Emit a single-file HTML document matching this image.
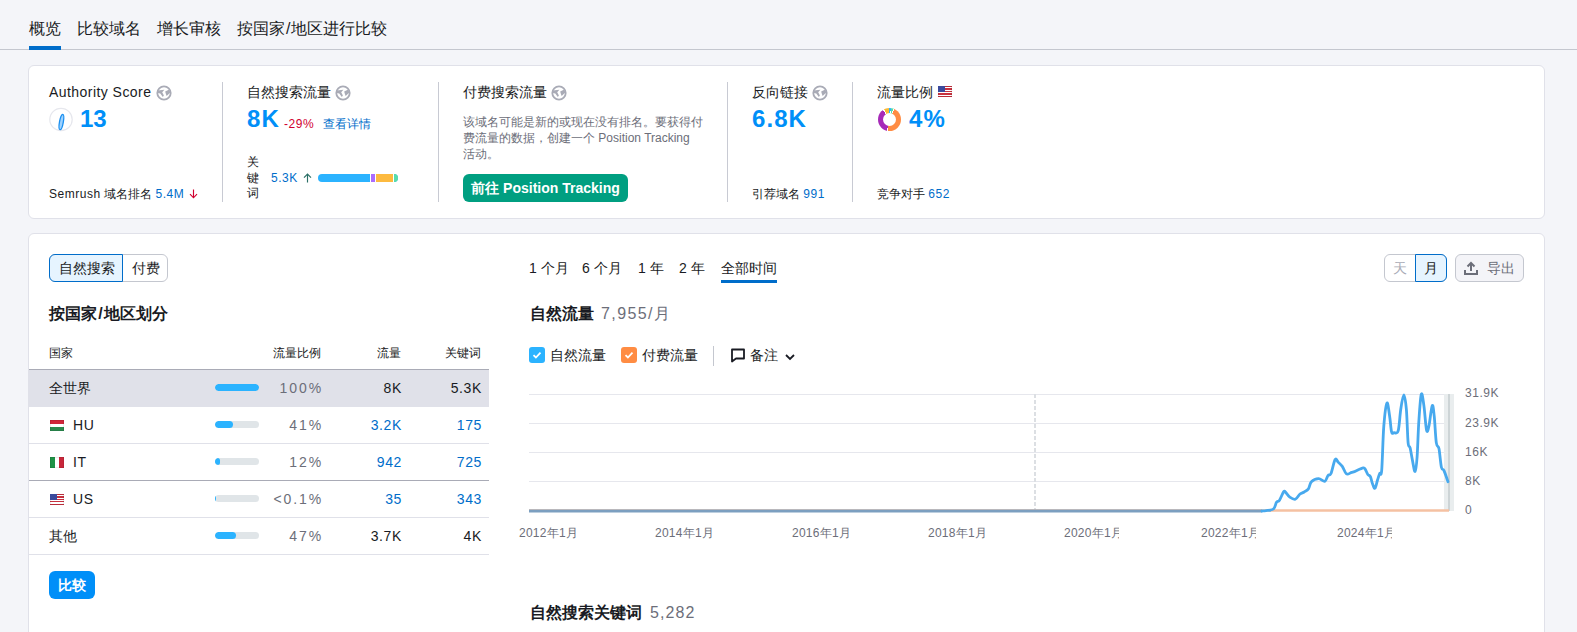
<!DOCTYPE html>
<html><head><meta charset="utf-8">
<style>
*{margin:0;padding:0;box-sizing:border-box}
html,body{width:1577px;height:632px;overflow:hidden}
body{background:#f4f5f9;font-family:"Liberation Sans",sans-serif;color:#191b23;position:relative}
.a{position:absolute;white-space:nowrap}
.tab{font-size:16px;top:19px;line-height:20px}
.card{position:absolute;background:#fff;border:1px solid #e0e1e9;border-radius:6px}
.t14{font-size:14px;line-height:16px}
.t12{font-size:12px;line-height:14px}
.big{font-size:24px;font-weight:bold;color:#008ff8;line-height:28px}
.vd{position:absolute;width:1px;background:#c8cad3;top:82px;height:120px}
.blue{color:#006dca}
.globe{position:absolute;width:16px;height:16px}

.row{position:absolute;left:0;width:490px;height:37px}
.bar{position:absolute;left:215px;top:15px;width:44px;height:7px;border-radius:4px;background:#e0e5e8;overflow:hidden}
.bar i{position:absolute;left:0;top:0;height:7px;background:#2bb3ff;border-radius:4px}
.pct{left:243px;top:11px;width:80px;text-align:right;color:#6c6e79}
.pct .l{letter-spacing:1.9px}
.c1{left:322px;top:11px;width:80px;text-align:right}
.c2{left:402px;top:11px;width:80px;text-align:right}
.flag{position:absolute;width:14px;height:11px;box-shadow:inset 0 0 0 0.5px rgba(0,0,0,.15)}
.hu{background:linear-gradient(#d0263a 0 33%,#fff 33% 66%,#2a8a4e 66%)}
.it{background:linear-gradient(90deg,#1f9146 0 33%,#fff 33% 66%,#c8263a 66%)}
.us{background:repeating-linear-gradient(#c8313f 0 0.85px,#fff 0.85px 1.7px)}
.us:before{content:"";position:absolute;left:0;top:0;width:7px;height:6px;background:#3b4a9c}
.ylab{left:1465px;font-size:12px;line-height:14px;color:#6c6e79}
.xlab{top:526px;font-size:12px;line-height:14px;color:#6c6e79;letter-spacing:0.25px}
.l{letter-spacing:0.045em}
</style></head>
<body>
<!-- top tabs -->
<div class="a tab" style="left:29px">概览</div>
<div class="a tab" style="left:77px">比较域名</div>
<div class="a tab" style="left:157px">增长审核</div>
<div class="a tab" style="left:237px">按国家<span style="padding:0 1px">/</span>地区进行比较</div>
<div class="a" style="left:0;top:49px;width:1577px;height:1px;background:#c4c7cf"></div>
<div class="a" style="left:29px;top:46px;width:32px;height:4px;background:#006dca"></div>

<!-- card 1 -->
<div class="card" style="left:28px;top:65px;width:1517px;height:154px"></div>
<div class="vd" style="left:222px"></div>
<div class="vd" style="left:438px"></div>
<div class="vd" style="left:727px"></div>
<div class="vd" style="left:852px"></div>

<div class="a t14" style="left:49px;top:84px"><span style="letter-spacing:0.032em">Authority Score</span></div>
<div class="globe" style="left:156px;top:85px"><svg width="16" height="16" viewBox="0 0 16 16"><circle cx="8" cy="8" r="6.7" fill="none" stroke="#a9abb6" stroke-width="1.8"/><path d="M1.5 5.6 L8.4 4.8 L6.2 7.3 L7.9 10.6 L6.8 12.1 L4.3 8.4 L1.7 8 Z" fill="#a9abb6"/><path d="M9.2 6.6 L13.3 4.4 L14.4 7.6 L10.6 11 L9.8 8.8 Z" fill="#a9abb6"/></svg></div>
<svg class="a" style="left:49px;top:107px" width="25" height="25" viewBox="0 0 25 25"><circle cx="12" cy="12.5" r="11.2" fill="none" stroke="#e6e7ed" stroke-width="1.2"/><ellipse cx="12.4" cy="15" rx="1.9" ry="7.8" transform="rotate(10 12.4 15)" fill="#9fd3ff" stroke="#1a8ff0" stroke-width="1.3"/></svg>
<div class="a big" style="left:80px;top:105px">13</div>
<div class="a t12" style="left:49px;top:187px"><span class="l">Semrush</span> 域名排名 <span class="blue"><span class="l">5.4M</span></span> <svg style="vertical-align:-1px;margin-left:1px" width="9" height="10" viewBox="0 0 9 10"><path d="M4.5 0.5v8.5M1 5.2l3.5 3.6 3.5-3.6" fill="none" stroke="#d1002f" stroke-width="1.15"/></svg></div>

<div class="a t14" style="left:247px;top:84px">自然搜索流量</div>
<div class="globe" style="left:335px;top:85px"><svg width="16" height="16" viewBox="0 0 16 16"><circle cx="8" cy="8" r="6.7" fill="none" stroke="#a9abb6" stroke-width="1.8"/><path d="M1.5 5.6 L8.4 4.8 L6.2 7.3 L7.9 10.6 L6.8 12.1 L4.3 8.4 L1.7 8 Z" fill="#a9abb6"/><path d="M9.2 6.6 L13.3 4.4 L14.4 7.6 L10.6 11 L9.8 8.8 Z" fill="#a9abb6"/></svg></div>
<div class="a big" style="left:247px;top:105px"><span class="l">8K</span></div>
<div class="a t12" style="left:284px;top:117px;color:#d1002f"><span class="l">-29%</span></div>
<div class="a t12 blue" style="left:323px;top:117px">查看详情</div>
<div class="a t12" style="left:247px;top:155px;line-height:15.5px;white-space:normal;width:14px">关<br>键<br>词</div>
<div class="a t12 blue" style="left:271px;top:171px"><span class="l">5.3K</span> <svg style="vertical-align:-1px;margin-left:2px" width="9" height="10" viewBox="0 0 9 10"><path d="M4.5 9.5V1M1 4.6l3.5-3.6 3.5 3.6" fill="none" stroke="#2a6f66" stroke-width="1.15"/></svg></div>
<div class="a" style="left:318px;top:174px;width:80px;height:8px;border-radius:4px;overflow:hidden;background:#2bb3ff">
  <div class="a" style="left:52px;top:0;width:1px;height:8px;background:#fff"></div>
  <div class="a" style="left:53px;top:0;width:4px;height:8px;background:#ab6cfe"></div>
  <div class="a" style="left:57px;top:0;width:1px;height:8px;background:#fff"></div>
  <div class="a" style="left:58px;top:0;width:17px;height:8px;background:#fdba3f"></div>
  <div class="a" style="left:75px;top:0;width:1px;height:8px;background:#fff"></div>
  <div class="a" style="left:76px;top:0;width:4px;height:8px;background:#59ddaa"></div>
</div>

<div class="a t14" style="left:463px;top:84px">付费搜索流量</div>
<div class="globe" style="left:551px;top:85px"><svg width="16" height="16" viewBox="0 0 16 16"><circle cx="8" cy="8" r="6.7" fill="none" stroke="#a9abb6" stroke-width="1.8"/><path d="M1.5 5.6 L8.4 4.8 L6.2 7.3 L7.9 10.6 L6.8 12.1 L4.3 8.4 L1.7 8 Z" fill="#a9abb6"/><path d="M9.2 6.6 L13.3 4.4 L14.4 7.6 L10.6 11 L9.8 8.8 Z" fill="#a9abb6"/></svg></div>
<div class="a t12" style="left:463px;top:114px;line-height:16px;color:#6c6e79;white-space:normal;width:250px">该域名可能是新的或现在没有排名。要获得付<br>费流量的数据，创建一个 Position Tracking<br>活动。</div>
<div class="a" style="left:463px;top:174px;width:165px;height:28px;background:#009f81;border-radius:6px;color:#fff;font-size:14px;font-weight:bold;line-height:28px;text-align:center">前往 Position Tracking</div>

<div class="a t14" style="left:752px;top:84px">反向链接</div>
<div class="globe" style="left:812px;top:85px"><svg width="16" height="16" viewBox="0 0 16 16"><circle cx="8" cy="8" r="6.7" fill="none" stroke="#a9abb6" stroke-width="1.8"/><path d="M1.5 5.6 L8.4 4.8 L6.2 7.3 L7.9 10.6 L6.8 12.1 L4.3 8.4 L1.7 8 Z" fill="#a9abb6"/><path d="M9.2 6.6 L13.3 4.4 L14.4 7.6 L10.6 11 L9.8 8.8 Z" fill="#a9abb6"/></svg></div>
<div class="a big" style="left:752px;top:105px"><span class="l">6.8K</span></div>
<div class="a t12" style="left:752px;top:187px">引荐域名 <span class="blue"><span class="l">991</span></span></div>

<div class="a t14" style="left:877px;top:84px">流量比例</div>
<div class="flag us" style="left:938px;top:86px;width:14px;height:11px"></div>
<div class="a" style="left:877.6px;top:107.7px;width:23px;height:23px;border-radius:50%;background:conic-gradient(#2bb3ff 0 7deg,#fff 7deg 9deg,#59ddaa 9deg 20deg,#fff 20deg 24deg,#ff8c43 24deg 190deg,#fff 190deg 194deg,#a62ab8 194deg 326deg,#fff 326deg 331deg,#f9b935 331deg 356deg,#fff 356deg 360deg)"></div>
<div class="a" style="left:882.6px;top:112.7px;width:13px;height:13px;border-radius:50%;background:#fff"></div>
<div class="a big" style="left:909px;top:105px"><span class="l">4%</span></div>
<div class="a t12" style="left:877px;top:187px">竞争对手 <span class="blue"><span class="l">652</span></span></div>

<!-- card 2 -->
<div class="card" style="left:28px;top:233px;width:1517px;height:420px"></div>


<!-- segmented -->
<div class="a" style="left:49px;top:254px;width:119px;height:28px;border:1px solid #c4c7cf;border-radius:6px"></div>
<div class="a" style="left:49px;top:254px;width:74px;height:28px;border:1px solid #006dca;border-radius:6px 0 0 6px;background:#e6f4ff"></div>
<div class="a t14" style="left:59px;top:260px;color:#191b23">自然搜索</div>
<div class="a t14" style="left:132px;top:260px">付费</div>

<div class="a" style="left:49px;top:305px;font-size:16px;font-weight:bold;line-height:18px">按国家<span style="padding:0 1.2px">/</span>地区划分</div>

<div class="a t12" style="left:49px;top:346px">国家</div>
<div class="a t12" style="left:241px;top:346px;width:80px;text-align:right">流量比例</div>
<div class="a t12" style="left:341px;top:346px;width:60px;text-align:right">流量</div>
<div class="a t12" style="left:421px;top:346px;width:60px;text-align:right">关键词</div>

<div class="a" style="left:29px;top:369px;width:460px;height:37px;background:#e0e1e9"></div>
<div class="a" style="left:29px;top:369px;width:460px;height:1px;background:#a9abb6"></div>
<div class="a" style="left:29px;top:406px;width:460px;height:1px;background:#e0e1e9"></div>
<div class="a" style="left:29px;top:443px;width:460px;height:1px;background:#e0e1e9"></div>
<div class="a" style="left:29px;top:480px;width:460px;height:1px;background:#a9abb6"></div>
<div class="a" style="left:29px;top:517px;width:460px;height:1px;background:#e0e1e9"></div>
<div class="a" style="left:29px;top:554px;width:460px;height:1px;background:#e0e1e9"></div>

<div class="row" style="top:369px">
  <div class="a t14" style="left:49px;top:11px">全世界</div>
  <div class="bar"><i style="width:44px"></i></div>
  <div class="a t14 pct"><span class="l">100%</span></div>
  <div class="a t14 c1"><span class="l">8K</span></div>
  <div class="a t14 c2"><span class="l">5.3K</span></div>
</div>
<div class="row" style="top:406px">
  <div class="flag hu" style="left:50px;top:14px"></div>
  <div class="a t14" style="left:73px;top:11px"><span class="l">HU</span></div>
  <div class="bar"><i style="width:18px"></i></div>
  <div class="a t14 pct"><span class="l">41%</span></div>
  <div class="a t14 c1 blue"><span class="l">3.2K</span></div>
  <div class="a t14 c2 blue"><span class="l">175</span></div>
</div>
<div class="row" style="top:443px">
  <div class="flag it" style="left:50px;top:14px"></div>
  <div class="a t14" style="left:73px;top:11px"><span class="l">IT</span></div>
  <div class="bar"><i style="width:5px"></i></div>
  <div class="a t14 pct"><span class="l">12%</span></div>
  <div class="a t14 c1 blue"><span class="l">942</span></div>
  <div class="a t14 c2 blue"><span class="l">725</span></div>
</div>
<div class="row" style="top:480px">
  <div class="flag us" style="left:50px;top:14px"></div>
  <div class="a t14" style="left:73px;top:11px"><span class="l">US</span></div>
  <div class="bar"><i style="width:1px"></i></div>
  <div class="a t14 pct"><span class="l">&lt;0.1%</span></div>
  <div class="a t14 c1 blue"><span class="l">35</span></div>
  <div class="a t14 c2 blue"><span class="l">343</span></div>
</div>
<div class="row" style="top:517px">
  <div class="a t14" style="left:49px;top:11px">其他</div>
  <div class="bar"><i style="width:21px"></i></div>
  <div class="a t14 pct"><span class="l">47%</span></div>
  <div class="a t14 c1"><span class="l">3.7K</span></div>
  <div class="a t14 c2"><span class="l">4K</span></div>
</div>

<div class="a" style="left:49px;top:571px;width:46px;height:28px;background:#008ff8;border-radius:6px;color:#fff;font-size:14px;font-weight:bold;line-height:28px;text-align:center">比较</div>

<!-- right: time tabs -->
<div class="a t14" style="left:529px;top:260px"><span class="l">1</span> 个月</div>
<div class="a t14" style="left:582px;top:260px"><span class="l">6</span> 个月</div>
<div class="a t14" style="left:638px;top:260px"><span class="l">1</span> 年</div>
<div class="a t14" style="left:679px;top:260px"><span class="l">2</span> 年</div>
<div class="a t14" style="left:721px;top:260px">全部时间</div>
<div class="a" style="left:721px;top:280px;width:56px;height:3px;background:#006dca"></div>

<div class="a" style="left:1384px;top:254px;width:63px;height:28px;border:1px solid #c4c7cf;border-radius:6px"></div>
<div class="a" style="left:1415px;top:254px;width:32px;height:28px;border:1px solid #006dca;border-radius:0 6px 6px 0;background:#e6f4ff"></div>
<div class="a t14" style="left:1393px;top:260px;color:#a9abb6">天</div>
<div class="a t14" style="left:1424px;top:260px">月</div>
<div class="a" style="left:1455px;top:254px;width:69px;height:28px;border:1px solid #c4c7cf;border-radius:6px;background:#f4f4f8"></div>
<svg class="a" style="left:1463px;top:260px" width="16" height="16" viewBox="0 0 16 16"><path d="M2 10v4h12v-4" fill="none" stroke="#6c6e79" stroke-width="2"/><path d="M8 11V3M4.5 6.5L8 3l3.5 3.5" fill="none" stroke="#6c6e79" stroke-width="2"/></svg>
<div class="a t14" style="left:1487px;top:260px;color:#6c6e79">导出</div>

<div class="a" style="left:530px;top:305px;font-size:16px;font-weight:bold;line-height:18px">自然流量</div>
<div class="a" style="left:601px;top:305px;font-size:16px;line-height:18px;color:#6c6e79"><span style="letter-spacing:1.4px">7,955/</span>月</div>

<!-- legend -->
<div class="a" style="left:529px;top:347px;width:16px;height:16px;border-radius:3px;background:#2bb3ff"></div>
<svg class="a" style="left:529px;top:347px" width="16" height="16"><path d="M4.5 8.2l2.4 2.3 4.6-4.8" fill="none" stroke="#fff" stroke-width="1.8"/></svg>
<div class="a t14" style="left:550px;top:347px">自然流量</div>
<div class="a" style="left:621px;top:347px;width:16px;height:16px;border-radius:3px;background:#ff8c43"></div>
<svg class="a" style="left:621px;top:347px" width="16" height="16"><path d="M4.5 8.2l2.4 2.3 4.6-4.8" fill="none" stroke="#fff" stroke-width="1.8"/></svg>
<div class="a t14" style="left:642px;top:347px">付费流量</div>
<div class="a" style="left:713px;top:346px;width:1px;height:20px;background:#c4c7cf"></div>
<svg class="a" style="left:730px;top:347px" width="16" height="16"><path d="M2 2.5h12v9H6l-4 3z" fill="none" stroke="#191b23" stroke-width="1.8" stroke-linejoin="round"/></svg>
<div class="a t14" style="left:750px;top:347px">备注</div>
<svg class="a" style="left:784px;top:351px" width="12" height="12"><path d="M2 4l4 4 4-4" fill="none" stroke="#191b23" stroke-width="1.8"/></svg>

<!-- chart -->
<svg class="a" style="left:0;top:0" width="1577" height="632">
  <g stroke="#e6e7ed" stroke-width="1">
    <line x1="529" y1="394.5" x2="1449" y2="394.5"/>
    <line x1="529" y1="423.5" x2="1449" y2="423.5"/>
    <line x1="529" y1="452.5" x2="1449" y2="452.5"/>
    <line x1="529" y1="481.5" x2="1449" y2="481.5"/>
  </g>
  <line x1="1035" y1="394" x2="1035" y2="510" stroke="#dcdfe3" stroke-width="2" stroke-dasharray="4 2"/>
  <rect x="1444" y="394" width="10" height="117" fill="#e9edee"/>
  <line x1="1449" y1="394" x2="1449" y2="511" stroke="#cdd4d6" stroke-width="2"/>
  <line x1="529" y1="510.5" x2="1449" y2="510.5" stroke="#f5c1a2" stroke-width="2.5"/>
  <path id="flat" d="M529 511 L1262 511" stroke="#7c9fc0" stroke-width="3" fill="none"/>
  <path id="line" d="M1262.0 511.0 C1262.7 510.9 1264.1 510.9 1266.0 510.6 C1267.9 510.3 1271.7 510.4 1273.4 509.0 C1275.2 507.6 1275.5 503.8 1276.5 502.3 C1277.5 500.8 1278.3 502.0 1279.5 500.2 C1280.7 498.4 1282.7 492.9 1283.7 491.6 C1284.7 490.3 1284.7 491.5 1285.7 492.4 C1286.7 493.3 1288.2 496.0 1289.8 497.1 C1291.4 498.2 1293.7 499.7 1295.4 499.2 C1297.1 498.7 1298.5 495.2 1300.0 494.0 C1301.5 492.8 1302.8 492.9 1304.2 492.0 C1305.6 491.1 1307.2 490.6 1308.4 488.9 C1309.6 487.2 1309.7 483.4 1311.4 481.7 C1313.1 480.0 1316.4 478.7 1318.6 478.6 C1320.8 478.5 1323.2 481.8 1324.8 481.3 C1326.4 480.8 1327.0 476.8 1328.0 475.5 C1329.0 474.2 1329.8 476.2 1331.0 473.5 C1332.2 470.8 1333.9 461.4 1335.1 459.5 C1336.3 457.6 1337.0 461.1 1338.2 462.2 C1339.4 463.3 1340.9 464.4 1342.3 466.3 C1343.7 468.2 1344.9 472.9 1346.4 473.9 C1348.0 474.9 1350.2 472.8 1351.6 472.4 C1353.0 472.0 1353.1 472.1 1355.0 471.4 C1356.9 470.6 1361.5 468.2 1363.2 467.9 C1364.9 467.6 1364.5 468.3 1365.3 469.4 C1366.1 470.5 1366.9 473.3 1367.8 474.5 C1368.7 475.7 1369.6 475.1 1370.4 476.6 C1371.2 478.2 1371.7 481.9 1372.5 483.8 C1373.3 485.8 1374.2 489.0 1375.0 488.3 C1375.8 487.6 1376.8 482.2 1377.6 479.7 C1378.4 477.2 1379.0 475.1 1379.7 473.5 C1380.4 471.9 1381.0 478.3 1381.7 470.4 C1382.4 462.5 1382.9 437.4 1383.8 426.2 C1384.7 415.0 1385.9 404.8 1386.9 403.1 C1387.9 401.4 1388.8 411.1 1389.6 415.9 C1390.4 420.7 1390.8 429.1 1391.6 431.9 C1392.3 434.7 1393.0 432.9 1394.1 432.7 C1395.2 432.5 1397.1 434.5 1398.2 430.7 C1399.3 426.9 1399.8 415.7 1400.7 409.7 C1401.6 403.7 1402.8 394.9 1403.8 394.9 C1404.8 394.9 1405.7 401.8 1406.4 409.7 C1407.1 417.6 1407.5 436.2 1408.1 442.6 C1408.7 449.0 1409.3 444.7 1410.1 447.8 C1410.8 450.9 1411.8 457.2 1412.6 461.1 C1413.4 465.0 1414.3 472.1 1415.1 471.4 C1415.8 470.7 1416.5 465.2 1417.1 457.0 C1417.7 448.8 1418.1 432.4 1418.8 422.0 C1419.5 411.6 1420.4 397.0 1421.3 394.3 C1422.2 391.6 1423.0 399.6 1423.9 405.6 C1424.8 411.6 1425.7 427.1 1426.6 430.3 C1427.5 433.6 1428.2 429.2 1429.1 425.1 C1430.0 421.0 1431.3 407.1 1432.2 405.6 C1433.1 404.1 1433.5 409.7 1434.2 415.9 C1434.9 422.1 1435.5 437.1 1436.3 442.6 C1437.1 448.1 1438.2 444.7 1439.0 448.8 C1439.8 452.9 1440.6 463.7 1441.4 467.3 C1442.2 470.9 1442.8 468.0 1443.9 470.4 C1445.0 472.8 1447.3 479.8 1448.0 481.7" stroke="#47a9ee" stroke-width="2.8" fill="none" stroke-linejoin="round" stroke-linecap="round"/>
</svg>
<div class="a ylab" style="top:386px"><span class="l">31.9K</span></div>
<div class="a ylab" style="top:416px"><span class="l">23.9K</span></div>
<div class="a ylab" style="top:445px"><span class="l">16K</span></div>
<div class="a ylab" style="top:474px"><span class="l">8K</span></div>
<div class="a ylab" style="top:503px"><span class="l">0</span></div>
<div class="a xlab" style="left:519px">2012年1月</div>
<div class="a xlab" style="left:655px">2014年1月</div>
<div class="a xlab" style="left:792px">2016年1月</div>
<div class="a xlab" style="left:928px">2018年1月</div>
<div class="a xlab" style="left:1064px;width:55px;overflow:hidden">2020年1月</div>
<div class="a xlab" style="left:1201px;width:55px;overflow:hidden">2022年1月</div>
<div class="a xlab" style="left:1337px;width:55px;overflow:hidden">2024年1月</div>

<div class="a" style="left:530px;top:604px;font-size:16px;font-weight:bold;line-height:18px">自然搜索关键词</div>
<div class="a" style="left:650px;top:604px;font-size:16px;line-height:18px;color:#6c6e79"><span style="letter-spacing:1.1px">5,282</span></div>

</body></html>
